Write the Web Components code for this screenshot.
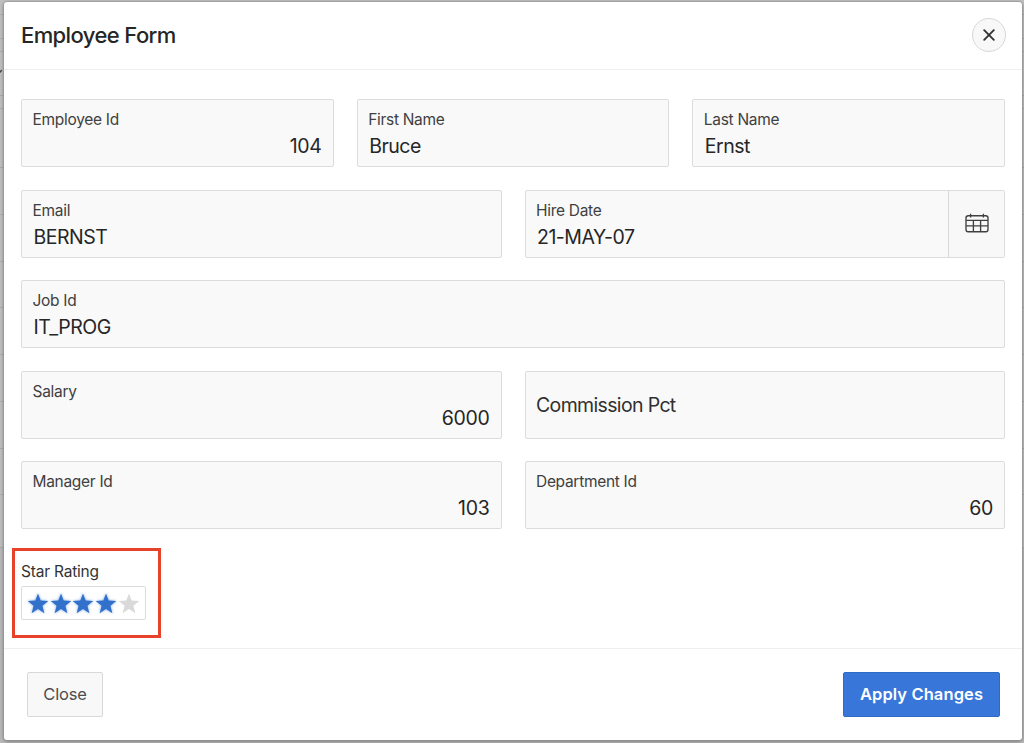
<!DOCTYPE html>
<html lang="en">
<head>
<meta charset="utf-8">
<title>Employee Form</title>
<style>
    body {
        margin: 0;
        height: 743px;
        overflow: hidden;
        background: #c2c1c1;
        font-family: Inter, "Liberation Sans", sans-serif;
        color: #262626;
    }
</style>
</head>
<body>
<page-backdrop>
    <form-dialog heading="Employee Form">
        <form-row columns="3">
            <form-field label="Employee Id" value="104" numeric></form-field>
            <form-field label="First Name" value="Bruce"></form-field>
            <form-field label="Last Name" value="Ernst"></form-field>
        </form-row>
        <form-row columns="2">
            <form-field label="Email" value="BERNST"></form-field>
            <form-field label="Hire Date" value="21-MAY-07"><calendar-button></calendar-button></form-field>
        </form-row>
        <form-row columns="1">
            <form-field label="Job Id" value="IT_PROG"></form-field>
        </form-row>
        <form-row columns="2">
            <form-field label="Salary" value="6000" numeric></form-field>
            <form-field label="Commission Pct"></form-field>
        </form-row>
        <form-row columns="2">
            <form-field label="Manager Id" value="103" numeric></form-field>
            <form-field label="Department Id" value="60" numeric></form-field>
        </form-row>
        <star-rating label="Star Rating" value="4" max="5"></star-rating>
        <form-button slot="footer">Close</form-button>
        <form-button slot="footer" hot>Apply Changes</form-button>
    </form-dialog>
</page-backdrop>

<script>
class PageBackdrop extends HTMLElement {
    constructor() {
        super();
        this.attachShadow({ mode: 'open' });
    }

    connectedCallback() {
        // report rows that stay visible left of the dialog
        const lines = [14, 38, 51, 95, 108, 167, 214, 261, 307, 354, 401, 448, 494, 547];
        this.shadowRoot.innerHTML = `
        <style>
            :host {
                display: block;
                position: relative;
                box-sizing: border-box;
                height: 743px;
                padding: 2px 2px 3px 4px;
            }
            svg {
                position: absolute;
                left: 0;
                top: 0;
            }
        </style>
        <svg width="1024" height="743">
            <rect width="1024" height="743" fill="#c2c1c1"/>
            <rect y="547" width="1024" height="196" fill="#bbbaba"/>
            ${lines.map(y => `<path d="M0 ${y + .5}H1024" stroke="#aeadad"/>`).join('')}
            <path d="M0 72.5L1.6 70.2" stroke="#333" stroke-width="1.3"/>
        </svg>
        <slot></slot>
        `;
    }
}

class FormDialog extends HTMLElement {
    constructor() {
        super();
        this.attachShadow({ mode: 'open' });
    }

    connectedCallback() {
        this.shadowRoot.innerHTML = `
        <style>
            :host {
                display: flex;
                flex-direction: column;
                position: relative;
                box-sizing: border-box;
                height: 738px;
                background: #fff;
                border-radius: 3px;
                box-shadow: 0 0 0 .5px #999, 0 1px 4px rgba(0, 0, 0, .45);
            }
            header {
                display: flex;
                align-items: center;
                justify-content: space-between;
                box-sizing: border-box;
                height: 68px;
                padding: 0 16.5px 1px 17px;
                border-bottom: 1px solid #efefef;
            }
            h1 {
                margin: 0;
                font-size: 22px;
                font-weight: 500;
                letter-spacing: -.6px;
            }
            .close {
                display: flex;
                align-items: center;
                justify-content: center;
                box-sizing: border-box;
                width: 34px;
                height: 34px;
                padding: 0;
                border: 1px solid #d8d8d8;
                border-radius: 50%;
                background: #f8f8f8;
            }
            main {
                flex: 1;
                display: flex;
                flex-direction: column;
                gap: 22.6px;
                padding: 29px 17px 0 17px;
            }
            footer {
                display: flex;
                align-items: center;
                justify-content: space-between;
                box-sizing: border-box;
                height: 92px;
                padding: 0 22px 0 23px;
                border-top: 1px solid #efefef;
            }
        </style>
        <header>
            <h1>${this.getAttribute('heading')}</h1>
            <button class="close" aria-label="Close dialog">
                <svg width="12" height="12" viewBox="0 0 12 12"><path d="M1.2 1.2L10.8 10.8M10.8 1.2L1.2 10.8" stroke="#333" stroke-width="1.9" stroke-linecap="round"/></svg>
            </button>
        </header>
        <main><slot></slot></main>
        <footer><slot name="footer"></slot></footer>
        `;
    }
}

class FormRow extends HTMLElement {
    constructor() {
        super();
        this.attachShadow({ mode: 'open' });
    }

    connectedCallback() {
        this.shadowRoot.innerHTML = `
        <style>
            :host {
                display: grid;
                grid-template-columns: repeat(${this.getAttribute('columns')}, 1fr);
                gap: 23px;
                height: 68px;
            }
        </style>
        <slot></slot>
        `;
    }
}

class FormField extends HTMLElement {
    constructor() {
        super();
        this.attachShadow({ mode: 'open' });
    }

    connectedCallback() {
        const label = this.getAttribute('label');
        const value = this.getAttribute('value');
        this.shadowRoot.innerHTML = `
        <style>
            :host {
                display: flex;
                box-sizing: border-box;
                border: 1px solid #dcdcdc;
                border-radius: 2px;
                background: #f9f9f9;
            }
            .text {
                flex: 1;
                padding: 10px 11px 0 10.5px;
            }
            .label {
                font-size: 15.5px;
                line-height: 20px;
                color: #404040;
                letter-spacing: -.3px;
            }
            .value {
                padding-left: 1px;
                margin-top: 3px;
                font-size: 19.5px;
                line-height: 26px;
                letter-spacing: -.5px;
            }
            :host([numeric]) .value {
                text-align: right;
                letter-spacing: -.3px;
            }
            .empty {
                align-self: center;
                padding-top: 0;
                font-size: 19.5px;
                letter-spacing: -.65px;
                color: #303030;
            }
        </style>
        ${value === null
            ? `<div class="text empty">${label}</div>`
            : `<div class="text"><div class="label">${label}</div><div class="value">${value}</div></div>`}
        <slot></slot>
        `;
    }
}

class CalendarButton extends HTMLElement {
    constructor() {
        super();
        this.attachShadow({ mode: 'open' });
    }

    connectedCallback() {
        this.shadowRoot.innerHTML = `
        <style>
            :host {
                display: flex;
                align-items: center;
                justify-content: center;
                box-sizing: border-box;
                width: 56px;
                height: 100%;
                padding-bottom: 2px;
                border-left: 1px solid #d8d8d8;
                background: #f8f8f8;
            }
        </style>
        <svg width="24" height="20" viewBox="0 0 24 20" fill="none" stroke="#404040" stroke-width="1.35">
            <rect x="1" y="2.7" width="22" height="16" rx="2.2"/>
            <path d="M1 7.3H23M1 12.8H23M8.4 7.3V18.7M15.6 7.3V18.7M5.6 .8V4.4M18.4 .8V4.4"/>
        </svg>
        `;
    }
}

class StarRating extends HTMLElement {
    constructor() {
        super();
        this.attachShadow({ mode: 'open' });
    }

    connectedCallback() {
        const value = Number(this.getAttribute('value'));
        const max = Number(this.getAttribute('max'));
        let stars = '';
        for (let i = 0; i < max; i++) {
            stars += `<svg class="${i < value ? 'on' : ''}" viewBox="0 0 22 21"><path d="M11 .5L13.7 7.6L21.3 8L15.4 12.8L17.4 20.2L11 16L4.6 20.2L6.6 12.8L.7 8L8.3 7.6Z"/></svg>`;
        }
        this.shadowRoot.innerHTML = `
        <style>
            :host {
                display: block;
                position: relative;
                align-self: flex-start;
            }
            .label {
                margin-top: 10.5px;
                font-size: 15.5px;
                line-height: 20px;
                letter-spacing: -.2px;
                color: #333;
            }
            .stars {
                display: flex;
                align-items: center;
                box-sizing: border-box;
                width: 125px;
                height: 34px;
                margin-top: 4px;
                padding-left: 5px;
                border: 1px solid #dcdcdc;
                border-radius: 2px;
            }
            svg {
                width: 22px;
                height: 21px;
                margin-right: .7px;
                fill: #d9d9d9;
                overflow: visible;
            }
            svg.on {
                fill: #3170cb;
                filter: drop-shadow(0 0 1.5px rgba(49, 112, 203, .6));
            }
            .highlight {
                position: absolute;
                left: -9.5px;
                top: -4px;
                box-sizing: border-box;
                width: 149px;
                height: 90px;
                border: 3px solid #e8432a;
            }
        </style>
        <div class="label">${this.getAttribute('label')}</div>
        <div class="stars">${stars}</div>
        <div class="highlight"></div>
        `;
    }
}

class FormButton extends HTMLElement {
    constructor() {
        super();
        this.attachShadow({ mode: 'open' });
    }

    connectedCallback() {
        this.shadowRoot.innerHTML = `
        <style>
            :host {
                display: block;
            }
            button {
                box-sizing: border-box;
                width: 76px;
                height: 45px;
                padding: 0 0 1px;
                border: 1px solid #d8d8d8;
                border-radius: 2px;
                background: #f8f8f8;
                color: #4d4d4d;
                font: inherit;
                font-size: 16.5px;
                letter-spacing: -.2px;
            }
            :host([hot]) button {
                width: 157px;
                border-color: #2f6bc4;
                background: #3876da;
                color: #fff;
                font-weight: 600;
                letter-spacing: .1px;
            }
        </style>
        <button><slot></slot></button>
        `;
    }
}

customElements.define('page-backdrop', PageBackdrop);
customElements.define('form-dialog', FormDialog);
customElements.define('form-row', FormRow);
customElements.define('form-field', FormField);
customElements.define('calendar-button', CalendarButton);
customElements.define('star-rating', StarRating);
customElements.define('form-button', FormButton);
</script>
</body>
</html>
